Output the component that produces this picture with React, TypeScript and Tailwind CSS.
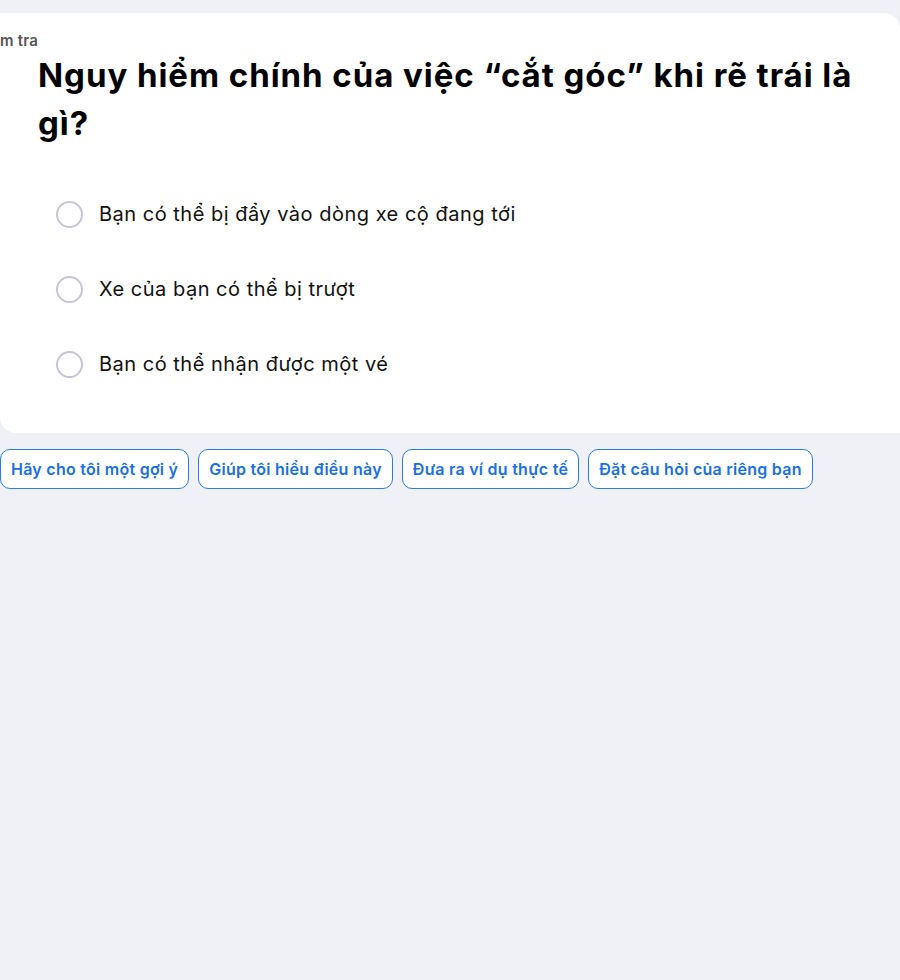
import React from "react";

const options = [
  "Bạn có thể bị đẩy vào dòng xe cộ đang tới",
  "Xe của bạn có thể bị trượt",
  "Bạn có thể nhận được một vé",
];

const hints = [
  "Hãy cho tôi một gợi ý",
  "Giúp tôi hiểu điều này",
  "Đưa ra ví dụ thực tế",
  "Đặt câu hỏi của riêng bạn",
];

const App: React.FC = () => {
  return (
    <div
      className="min-h-screen bg-[#f0f1f6] pt-[13px]"
      style={{ fontFamily: "Inter, 'Noto Sans', sans-serif" }}
    >
      <div className="bg-white rounded-bl-2xl rounded-tr-2xl overflow-hidden pt-[20px] pb-[55px]">
        <div className="ml-[-24px] text-[15px] font-semibold leading-[16px] tracking-[0.2px] text-[#555555]">
          Kiểm tra
        </div>
        <h1 className="ml-[38px] mt-[2px] max-w-[830px] text-[33px] font-bold leading-[48px] text-black tracking-[0.95px]">
          Nguy hiểm chính của việc “cắt góc” khi rẽ trái là gì?
        </h1>
        <div className="mt-[53px] ml-[56px] flex flex-col gap-[47px]">
          {options.map((o) => (
            <label key={o} className="flex items-center gap-[16px] cursor-pointer">
              <span className="w-[27px] h-[27px] rounded-full border-2 border-[#c6c4d6] bg-white shrink-0" />
              <span className="text-[20px] leading-[28px] tracking-[0.5px] text-[#111111]">{o}</span>
            </label>
          ))}
        </div>
      </div>
      <div className="flex gap-[9px] mt-[16px]">
        {hints.map((h) => (
          <button
            key={h}
            className="h-[40px] px-[10px] rounded-[10px] border border-[#2a7be4] bg-white text-[16px] font-semibold tracking-[0.26px] text-[#1b6fe0]"
          >
            {h}
          </button>
        ))}
      </div>
    </div>
  );
};

export default App;
